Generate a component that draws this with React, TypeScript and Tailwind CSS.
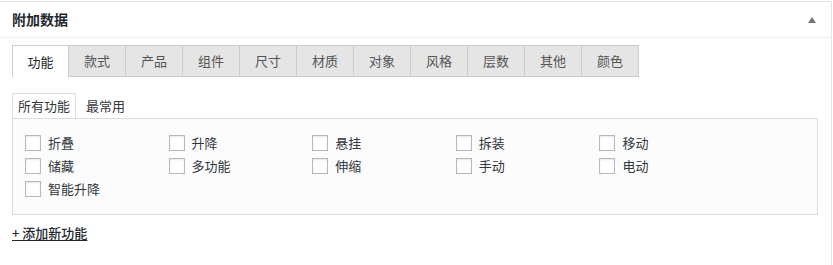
const tabs = ["功能", "款式", "产品", "组件", "尺寸", "材质", "对象", "风格", "层数", "其他", "颜色"];

const items = ["折叠", "升降", "悬挂", "拆装", "移动", "储藏", "多功能", "伸缩", "手动", "电动", "智能升降"];

export default function App() {
  return (
    <div
      className="w-[833px] h-[265px] bg-white text-[#32373c] overflow-hidden"
      style={{ fontFamily: '"Noto Sans CJK SC", "Liberation Sans", sans-serif' }}
    >
      <div className="w-[832px] h-[265px] border-t border-r border-[#e5e5e5] mt-px">
        <div className="h-[36px] flex items-center justify-between pl-[12px] pr-[15px] border-b border-[#eeeeee]">
          <h2 className="text-[14px] font-semibold text-[#23282d]">附加数据</h2>
          <svg className="h-[6px] w-[8px]" viewBox="0 0 8 6" fill="#72777c">
            <path d="M4 0 L8 6 L0 6 Z" />
          </svg>
        </div>

        <div className="px-[12px] pt-[7px]">
          <div className="flex">
            {tabs.map((t, i) => (
              <div
                key={t}
                className={
                  i === 0
                    ? "w-[57px] h-[32px] flex items-center justify-center text-[13px] bg-white border border-b-0 border-[#cccccc] text-[#23282d]"
                    : "w-[57px] h-[32px] flex items-center justify-center text-[13px] bg-[#e5e5e5] border border-l-0 border-[#cccccc] text-[#555555]"
                }
              >
                {t}
              </div>
            ))}
          </div>

          <div className="flex items-end mt-[16px] h-[25px]">
            <div className="w-[64px] h-[25px] flex items-center justify-center text-[13px] bg-white border border-b-0 border-[#dddddd] text-[#32373c]">
              所有功能
            </div>
            <div className="ml-[10px] h-[25px] flex items-center text-[13px] text-[#32373c]">最常用</div>
          </div>

          <div className="w-[806px] border border-[#dddddd] bg-[#fcfcfc] pt-[12px] pb-[14px] pl-[12px]">
            <div className="grid grid-cols-[repeat(5,143.6px)]">
              {items.map((it) => (
                <label key={it} className="h-[23px] flex items-center gap-[7px] text-[13px] text-[#32373c]">
                  <span className="w-[16px] h-[16px] bg-white border border-[#b4b9be] shadow-[inset_0_1px_2px_rgba(0,0,0,0.1)]" />
                  {it}
                </label>
              ))}
            </div>
          </div>

          <a href="#" className="inline-block mt-[8px] text-[13px] leading-[20px] font-medium text-[#23282d] underline underline-offset-2">
            + 添加新功能
          </a>
        </div>
      </div>
    </div>
  );
}
